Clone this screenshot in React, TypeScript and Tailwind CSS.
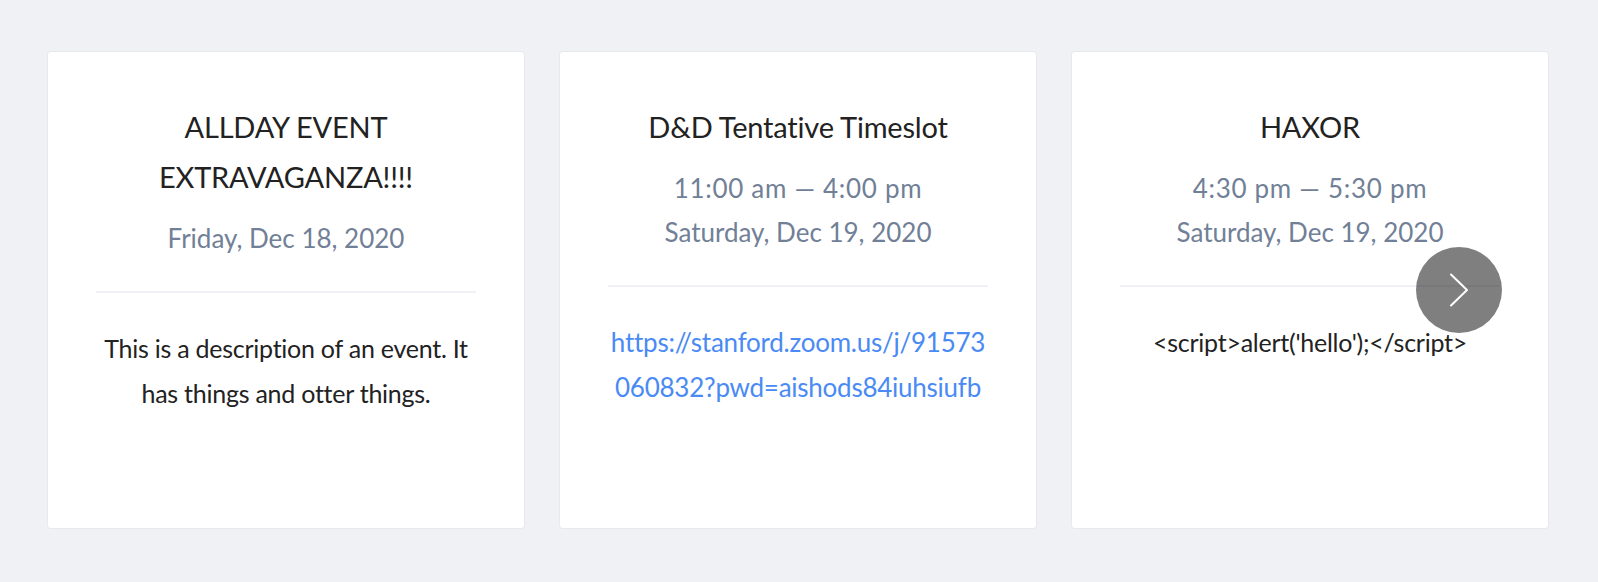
type EventItem = {
  title: string;
  time?: string;
  date: string;
  body: string;
  isLink?: boolean;
};

const events: EventItem[] = [
  {
    title: "ALLDAY EVENT EXTRAVAGANZA!!!!",
    date: "Friday, Dec 18, 2020",
    body: "This is a description of an event. It has things and otter things.",
  },
  {
    title: "D&D Tentative Timeslot",
    time: "11:00 am — 4:00 pm",
    date: "Saturday, Dec 19, 2020",
    body: "https://stanford.zoom.us/j/91573060832?pwd=aishods84iuhsiufb",
    isLink: true,
  },
  {
    title: "HAXOR",
    time: "4:30 pm — 5:30 pm",
    date: "Saturday, Dec 19, 2020",
    body: "<script>alert('hello');</script>",
  },
];

function EventCard({ event }: { event: EventItem }) {
  return (
    <div className="h-[476px] bg-white rounded-[3px] shadow-[0_0_0_1px_rgba(0,0,0,0.03)] flex flex-col items-center text-center px-12 pt-[50px]">
      {/* Title */}
      <h2 className="text-[29px] leading-[50px] tracking-[-0.2px] text-[#222222] font-normal">
        {event.title}
      </h2>

      {/* When */}
      <div className="mt-[14px] text-[26px] leading-[44px] text-[#718096]">
        {event.time && <div className="tracking-[0.7px]">{event.time}</div>}
        <div>{event.date}</div>
      </div>

      <div className="mt-[31px] h-[2px] w-full bg-[#eff1f4]" />

      {/* Body */}
      {event.isLink ? (
        <a
          href="#"
          className="mt-[33px] w-full text-[26px] leading-[45px] tracking-[-0.25px] text-[#4a8af4] break-all"
        >
          {event.body}
        </a>
      ) : (
        <p className="mt-[33px] text-[25px] leading-[45px] tracking-[-0.25px] text-[#222222]">
          {event.body}
        </p>
      )}
    </div>
  );
}

export default function App() {
  return (
    <div className="relative min-h-screen bg-[#f0f1f5] px-12 pt-[52px] pb-[54px] font-['Lato',sans-serif]">
      <div className="grid grid-cols-3 gap-9 w-[1500px]">
        {events.map((event) => (
          <EventCard key={event.title} event={event} />
        ))}
      </div>

      {/* Carousel next button */}
      <button className="absolute left-[1416px] top-[247px] w-[86px] h-[86px] rounded-full bg-black/50 flex items-center justify-center">
        <svg width="20" height="34" viewBox="0 0 20 34" fill="none">
          <path
            d="M2 1.5 L18 17 L2 32.5"
            stroke="white"
            strokeWidth="2"
            strokeLinecap="round"
            strokeLinejoin="round"
          />
        </svg>
      </button>
    </div>
  );
}
